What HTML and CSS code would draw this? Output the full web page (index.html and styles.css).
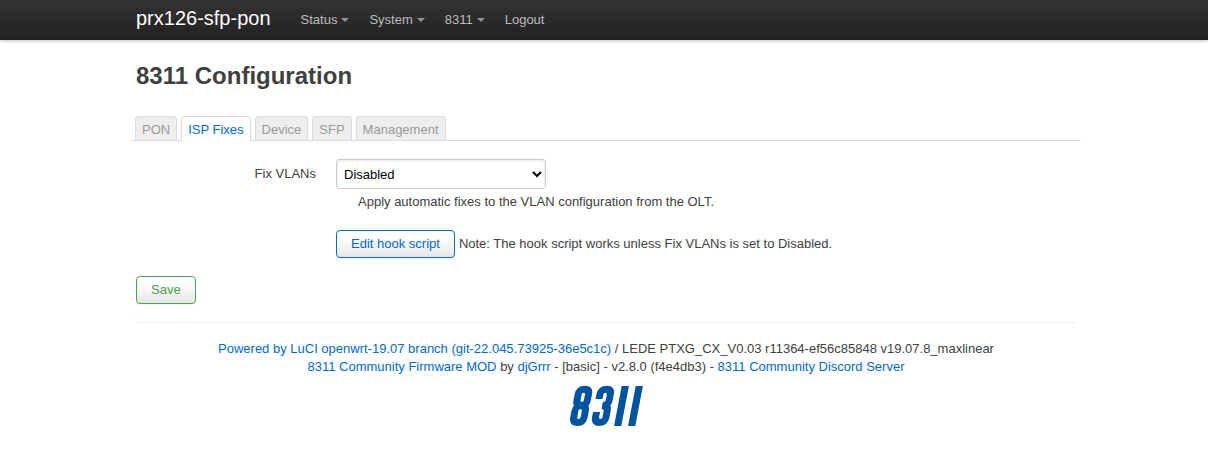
FILE: index.html
```html
<!DOCTYPE html>
<html lang="en">
<head>
<meta charset="utf-8">
<title>prx126-sfp-pon - 8311 Configuration - LuCI</title>
<link rel="stylesheet" href="styles.css">
</head>
<body>
<header class="bar">
  <div class="bar-inner">
    <a class="brand" href="#">prx126-sfp-pon</a>
    <nav class="nav">
      <a class="menu" href="#">Status</a>
      <a class="menu" href="#">System</a>
      <a class="menu" href="#">8311</a>
      <a href="#">Logout</a>
    </nav>
  </div>
</header>
<main class="container">
  <h2 class="title">8311 Configuration</h2>
  <ul class="tabs">
    <li class="tab">PON</li>
    <li class="tab active">ISP Fixes</li>
    <li class="tab">Device</li>
    <li class="tab">SFP</li>
    <li class="tab">Management</li>
  </ul>
  <div class="row">
    <label class="label" for="fix">Fix VLANs</label>
    <div class="field">
      <select class="select" id="fix"><option>Disabled</option></select>
      <div class="hint">Apply automatic fixes to the VLAN configuration from the OLT.</div>
      <div class="hook"><button class="btn action">Edit hook script</button><span>Note: The hook script works unless Fix VLANs is set to Disabled.</span></div>
    </div>
  </div>
  <button class="btn save">Save</button>
  <footer class="footer">
    <div><a href="#">Powered by LuCI openwrt-19.07 branch (git-22.045.73925-36e5c1c)</a> / LEDE PTXG_CX_V0.03 r11364-ef56c85848 v19.07.8_maxlinear</div>
    <div><a href="#">8311 Community Firmware MOD</a> by <a href="#">djGrrr</a> - [basic] - v2.8.0 (f4e4db3) - <a href="#">8311 Community Discord Server</a></div>
    <svg class="logo" viewBox="0 0 74 42" role="img" aria-label="8311">
      <g transform="translate(8.1 0) skewX(-10.8)" fill="none" stroke="#00549f">
        <path stroke-width="7" d="M7.5 20.5Q2.8 19.5 2.8 15.5V9.5Q2.8 4.2 8 4.2T13.2 9.5V15.5Q13.2 19.5 8.5 20.5Q13.2 21.5 13.2 25.5V32.2Q13.2 37.5 8 37.5T2.8 32.2V25.5Q2.8 21.5 7.5 20.5"/>
        <path stroke-width="7" d="M24.6 14V9.5Q24.6 4.2 29.8 4.2T35 9.5V15.5Q35 20.5 29 20.5Q35 20.5 35 25.5V32.2Q35 37.5 29.8 37.5T24.6 32.2V27"/>
        <path stroke-width="7.2" d="M48.4 1V41M62.4 1V41"/>
      </g>
    </svg>
  </footer>
</main>
</body>
</html>
```
FILE: styles.css
```css
body { margin: 0; background: #fff; color: #404040; font: 13px/18px "Liberation Sans", Arial, sans-serif; }
a { color: #0069d6; text-decoration: none; }
.bar { height: 40px; background: linear-gradient(#333, #222); box-shadow: 0 1px 3px rgba(0,0,0,.25), inset 0 -1px 0 rgba(0,0,0,.1); }
.bar-inner, .container { width: 940px; margin: 0 auto; padding-left: 4px; }
.bar-inner { display: flex; text-shadow: 0 -1px 0 rgba(0,0,0,.25); }
.brand { color: #fff; font-size: 20px; line-height: 20px; padding: 8px 20px 12px 0; }
.nav { display: flex; }
.nav a { color: #bfbfbf; padding: 11px 10px; }
.menu::after { content: ""; display: inline-block; border: 4px solid transparent; border-top-color: #fff; border-bottom: 0; margin-left: 4px; vertical-align: 2px; opacity: .5; }
.title { margin: 0; padding-top: 18px; font-size: 24px; line-height: 36px; }
.tabs { display: flex; list-style: none; gap: 4px; margin: 22px -5px 18px; padding: 0 4px; border-bottom: 1px solid #ddd; }
.tab { height: 24px; line-height: 26px; box-sizing: border-box; padding: 0 6px; color: #999; background: #eee; border: 1px solid #ddd; border-bottom: 0; border-radius: 4px 4px 0 0; }
.tab.active { color: #0069d6; background: #fff; margin-bottom: -1px; height: 25px; }
.row { display: flex; }
.label { width: 180px; margin-right: 20px; padding-top: 6px; text-align: right; }
.select { display: block; box-sizing: border-box; width: 210px; height: 30px; padding: 4px 4px 4px 3px; font: inherit; color: #000; background: #fff; border: 1px solid #ccc; border-radius: 3px; box-shadow: inset 0 1px 3px rgba(0,0,0,.1); }
.hint { padding: 4px 0 0 22px; }
.hook { display: flex; gap: 4px; align-items: center; margin-top: 19px; }
.btn { box-sizing: border-box; height: 28px; padding: 0 14px; font: inherit; background: linear-gradient(#fff 25%, #e6e6e6); border: 1px solid; border-radius: 4px; box-shadow: 0 1px 2px rgba(0,0,0,.05); }
.action { color: #0069d6; }
.save { display: block; margin-top: 18px; color: #46a546; }
.footer { margin-top: 18px; border-top: 1px solid #eee; padding-top: 17px; text-align: center; }
.logo { display: block; width: 74px; height: 42px; margin: 9px auto 0; }
```
